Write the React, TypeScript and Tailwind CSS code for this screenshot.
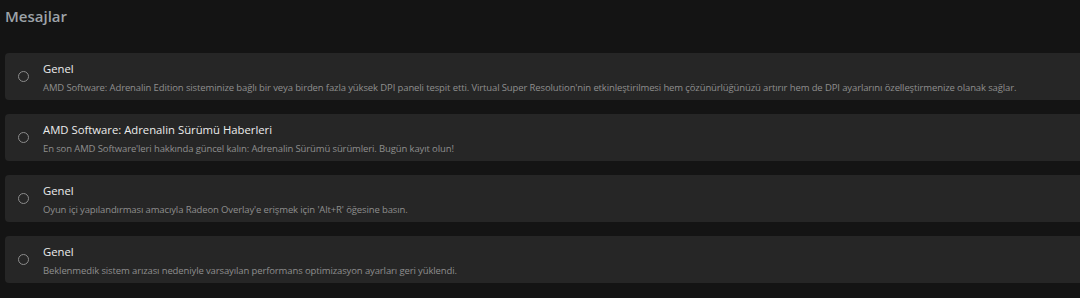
import React from 'react'

const messages = [
  {
    title: 'Genel',
    body: "AMD Software: Adrenalin Edition sisteminize bağlı bir veya birden fazla yüksek DPI paneli tespit etti. Virtual Super Resolution'nin etkinleştirilmesi hem çözünürlüğünüzü artırır hem de DPI ayarlarını özelleştirmenize olanak sağlar.",
  },
  {
    title: 'AMD Software: Adrenalin Sürümü Haberleri',
    body: "En son AMD Software'leri hakkında güncel kalın: Adrenalin Sürümü sürümleri. Bugün kayıt olun!",
  },
  {
    title: 'Genel',
    body: "Oyun içi yapılandırması amacıyla Radeon Overlay'e erişmek için 'Alt+R' öğesine basın.",
  },
  {
    title: 'Genel',
    body: 'Beklenmedik sistem arızası nedeniyle varsayılan performans optimizasyon ayarları geri yüklendi.',
  },
]

const MessageCard = ({ title, body }: { title: string; body: string }) => (
  <div className="flex items-center h-[47px] bg-[#262626] rounded-l-[4px] pl-[13px] -mr-2">
    <span className="w-[11px] h-[11px] rounded-full border border-[#8c8c8c] shrink-0" />
    <div className="ml-[14px] pt-[3px] flex flex-col">
      <div className="text-[11.3px] leading-[16px] text-[#ececec]">{title}</div>
      <div className="mt-[3px] text-[9.5px] tracking-[-0.12px] leading-[16px] text-[#8e8e8e] whitespace-nowrap">{body}</div>
    </div>
  </div>
)

export default function App() {
  return (
    <div
      className="w-[1080px] h-[298px] overflow-hidden bg-[#141414] pl-[5px]"
      style={{ fontFamily: '"Open Sans", "Noto Sans", sans-serif' }}
    >
      <h1 className="pt-[5px] h-[53px] text-[15px] font-semibold text-[#9da3a8]">Mesajlar</h1>
      <div className="flex flex-col gap-[14px]">
        {messages.map((m, i) => (
          <MessageCard key={i} title={m.title} body={m.body} />
        ))}
      </div>
    </div>
  )
}
